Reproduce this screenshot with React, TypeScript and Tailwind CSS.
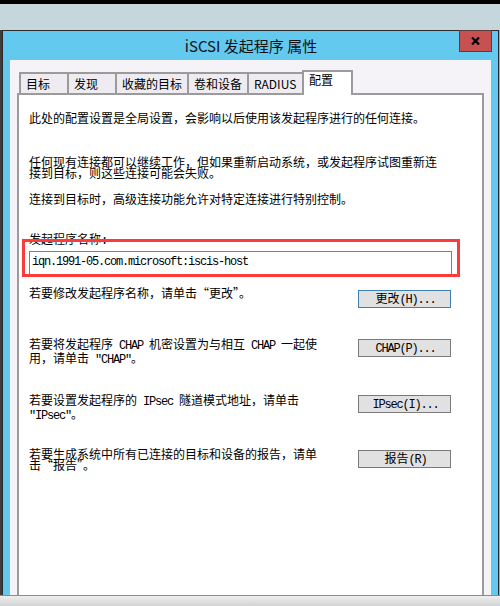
import React from "react";

const CJK = "font-['Noto_Sans_CJK_SC','Noto_Sans',sans-serif]";

// half-width ascii, SimSun-like 6px advance
function A({ children }: { children: React.ReactNode }) {
  return (
    <span className="font-['Liberation_Mono','Noto_Sans_CJK_SC',monospace] text-[12px] tracking-[-1.2px]">
      {children}
    </span>
  );
}

const TABS = [
  { label: "目标", w: "w-[48px]" },
  { label: "发现", w: "w-[48px]" },
  { label: "收藏的目标", w: "w-[72px]" },
  { label: "卷和设备", w: "w-[60px]" },
  { label: "RADIUS", w: "w-[55px]" },
];

function Btn({ children, primary }: { children: React.ReactNode; primary?: boolean }) {
  return (
    <div
      className={
        "shrink-0 w-[93px] h-[18px] mr-[31px] bg-[#e1e1e1] border flex items-center justify-center leading-[12px] " +
        (primary ? "border-[#3c7fb1]" : "border-[#7a7a7a]")
      }
    >
      <span className="pl-[2px]">{children}</span>
    </div>
  );
}

export default function App() {
  return (
    <div className={`relative w-[500px] h-[606px] overflow-hidden flex flex-col text-black text-[12px] ${CJK}`}>
      <div className="h-[4px] bg-black shrink-0" />
      <div className="h-[26px] bg-[#c5d7dd] shrink-0" />

      <div className="flex h-[565px] shrink-0">
        <div className="w-[2px] bg-[#3d3d3d]" />
        <div className="w-[497px] border-x border-t border-[#2b2b2b] bg-[#63c9ef] flex flex-col">
          <div className="relative h-[29px] shrink-0 flex items-center justify-center">
            <span className="text-[15px] leading-[18px] text-[#111] pl-[1px]">iSCSI 发起程序 属性</span>
            <div className="absolute top-[-1px] right-[6px] w-[33px] h-[22px] bg-[#c75050] border border-[#5a3c3c] flex items-center justify-center">
              <svg width="9" height="8" viewBox="0 0 9 8">
                <path d="M1 0.5 L8 7.5 M8 0.5 L1 7.5" stroke="#000" strokeWidth="2.2" />
              </svg>
            </div>
          </div>

          <div className="flex-1 mx-[7px] bg-[#f5f3f7] px-[7px] pt-[10px] overflow-hidden">
            {/* tabs */}
            <div className="relative z-10 flex items-start h-[25px] pl-[2px] mb-[-2px]">
              {TABS.map((t) => (
                <div
                  key={t.label}
                  className={`${t.w} mt-[2px] h-[21px] border-t-2 border-l-2 border-[#9b9b9b] bg-[#eeecf0] flex items-center pl-[5px] leading-[12px] whitespace-nowrap`}
                >
                  {t.label}
                </div>
              ))}
              <div className="w-[51px] h-[25px] border-2 border-b-0 border-[#9b9b9b] bg-white pl-[5px] pt-[2px] leading-[12px]">
                配置
              </div>
            </div>

            {/* panel */}
            <div className="h-[520px] border-2 border-[#9b9b9b] bg-white whitespace-nowrap">
              <div className="pl-[10px] mt-[17px] leading-[12px]">
                此处的配置设置是全局设置，会影响以后使用该发起程序进行的任何连接。
              </div>
              <div className="pl-[10px] mt-[32px] leading-[11px]">
                任何现有连接都可以继续工作，但如果重新启动系统，或发起程序试图重新连
                <br />
                接到目标，则这些连接可能会失败。
              </div>
              <div className="pl-[10px] mt-[15px] leading-[12px]">
                连接到目标时，高级连接功能允许对特定连接进行特别控制。
              </div>
              <div className="pl-[10px] mt-[28px] leading-[12px]">
                发起程序名称<A>:</A>
              </div>
              <div className="ml-[10px] mt-[4px] w-[423px] h-[25px] border border-[#7f7f7f] pt-[2px] pl-[2px] leading-[12px]">
                <A>iqn.1991-05.com.microsoft:iscis-host</A>
              </div>

              <div className="flex items-start mt-[11px] pl-[10px]">
                <div className="flex-1 leading-[12px]">若要修改发起程序名称，请单击“更改”。</div>
                <div className="mt-[3px]">
                  <Btn primary>
                    更改<A>(H)...</A>
                  </Btn>
                </div>
              </div>

              <div className="flex items-start mt-[30px] pl-[10px]">
                <div className="flex-1 leading-[11px]">
                  若要将发起程序<A> CHAP </A>机密设置为与相互<A> CHAP </A>一起使
                  <br />
                  用，请单击<A> "CHAP"</A>。
                </div>
                <div className="mt-[1px]">
                  <Btn>
                    <A>CHAP(P)...</A>
                  </Btn>
                </div>
              </div>

              <div className="flex items-start mt-[28px] pl-[10px]">
                <div className="flex-1 leading-[11px]">
                  若要设置发起程序的<A> IPsec </A>隧道模式地址，请单击
                  <br />
                  <A>"IPsec"</A>。
                </div>
                <div className="mt-[1px]">
                  <Btn>
                    <A>IPsec(I)...</A>
                  </Btn>
                </div>
              </div>

              <div className="flex items-start mt-[26px] pl-[10px]">
                <div className="flex-1 leading-[11px]">
                  若要生成系统中所有已连接的目标和设备的报告，请单
                  <br />
                  击“报告”。
                </div>
                <div className="mt-[2px]">
                  <Btn>
                    报告<A>(R)</A>
                  </Btn>
                </div>
              </div>
            </div>
          </div>
        </div>
        <div className="w-[1px] bg-[#5ec4ea]" />
      </div>

      <div className="h-[11px] shrink-0 border-t border-[#8c8c8c] bg-gradient-to-b from-[#efefef] to-[#d3d3d3]" />

      {/* red annotation box */}
      <div className="absolute left-[22px] top-[239px] w-[438px] h-[38px] border-[3px] border-[#fa3c3c]" />
    </div>
  );
}
